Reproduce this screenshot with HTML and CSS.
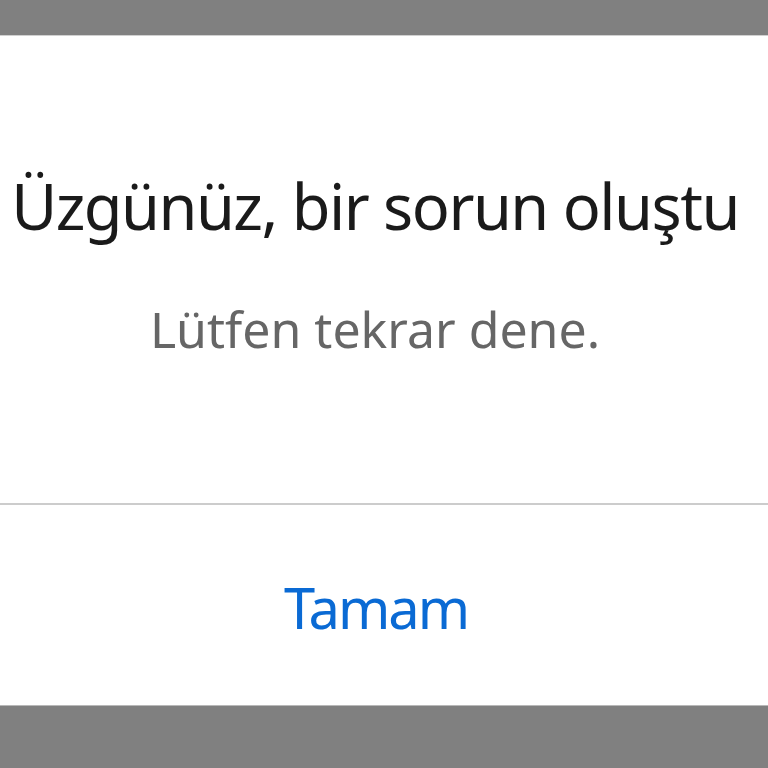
FILE: index.html
```html
<!DOCTYPE html>
<html>
<head>
<meta charset="utf-8">
<link rel="stylesheet" href="styles.css">
</head>
<body>
<div class="screen">
  <div class="dialog">
    <div class="body">
      <h1 class="title">Üzgünüz, bir sorun oluştu</h1>
      <p class="message">Lütfen tekrar dene.</p>
    </div>
    <div class="divider"></div>
    <div class="actions">
      <button class="btn">Tamam</button>
    </div>
  </div>
</div>
</body>
</html>
```
FILE: styles.css
```css
html, body {
  margin: 0;
  padding: 0;
  background: #808080;
}
.screen {
  width: 768px;
  height: 768px;
  display: flex;
  flex-direction: column;
  padding-top: 35px;
  box-sizing: border-box;
}
.dialog {
  background: #ffffff;
  height: 671px;
  display: flex;
  flex-direction: column;
  font-family: "Noto Sans", sans-serif;
  border-top: 1px solid #d0d0d0;
  border-bottom: 1px solid #b8b8b8;
  box-sizing: border-box;
}
.body {
  height: 467px;
  display: flex;
  flex-direction: column;
  align-items: center;
  padding-top: 130px;
  padding-right: 18px;
  box-sizing: border-box;
}
.title {
  margin: 0;
  font-weight: 400;
  font-size: 63px;
  letter-spacing: -1.5px;
  line-height: 80px;
  color: #1a1a1a;
  white-space: nowrap;
}
.message {
  margin: 53px 0 0;
  font-weight: 400;
  font-size: 50px;
  line-height: 60px;
  color: #666666;
}
.divider {
  height: 2px;
  background: #cccccc;
}
.actions {
  flex: 1;
  display: flex;
  justify-content: center;
  align-items: center;
  padding-right: 16px;
}
.btn {
  border: none;
  background: none;
  font-family: "Noto Sans", sans-serif;
  font-weight: 400;
  font-size: 56px;
  letter-spacing: -2px;
  color: #0a6ad4;
  padding: 0;
  margin-top: 4px;
}
```
